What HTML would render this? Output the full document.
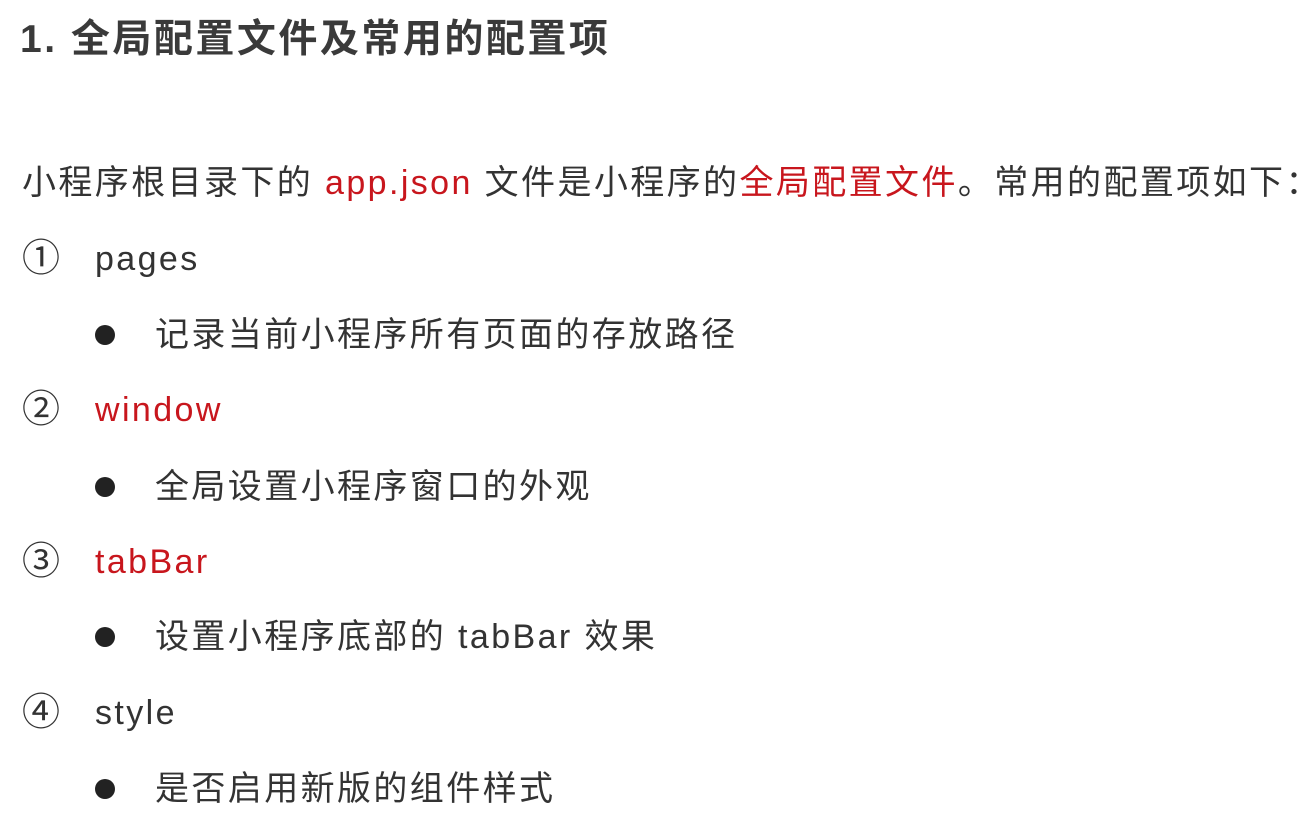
<!DOCTYPE html>
<html><head><meta charset="utf-8"><style>
body{margin:0;width:1315px;height:822px;background:#fff;overflow:hidden;font-family:"Liberation Sans","Noto Sans CJK SC",sans-serif;color:#333;}
.l{position:absolute;white-space:nowrap;font-size:34px;letter-spacing:2.4px;line-height:40px;}
.h{font-weight:bold;color:#3a3a3a;font-size:39px;letter-spacing:2.5px;line-height:44px;}
.r{color:#c8161d;}
.n{font-size:38px;letter-spacing:0;}
.dot{position:absolute;width:20px;height:20px;border-radius:50%;background:#222;}
</style></head><body>
<div class="l h" style="left:20px;top:18px">1. 全局配置文件及常用的配置项</div>
<div class="l" style="left:22px;top:163px">小程序根目录下的 <span class="r">app.json</span> 文件是小程序的<span class="r">全局配置文件</span>。常用的配置项如下：</div>
<div class="l n" style="left:22px;top:239px">①</div><div class="l" style="left:95px;top:239px">pages</div>
<div class="dot" style="left:95px;top:325px"></div><div class="l" style="left:155px;top:315px">记录当前小程序所有页面的存放路径</div>
<div class="l n" style="left:22px;top:390px">②</div><div class="l r" style="left:95px;top:390px">window</div>
<div class="dot" style="left:95px;top:477px"></div><div class="l" style="left:155px;top:467px">全局设置小程序窗口的外观</div>
<div class="l n" style="left:22px;top:542px">③</div><div class="l r" style="left:95px;top:542px">tabBar</div>
<div class="dot" style="left:95px;top:627px"></div><div class="l" style="left:155px;top:617px">设置小程序底部的 tabBar 效果</div>
<div class="l n" style="left:22px;top:693px">④</div><div class="l" style="left:95px;top:693px">style</div>
<div class="dot" style="left:95px;top:779px"></div><div class="l" style="left:155px;top:769px">是否启用新版的组件样式</div>
</body></html>
